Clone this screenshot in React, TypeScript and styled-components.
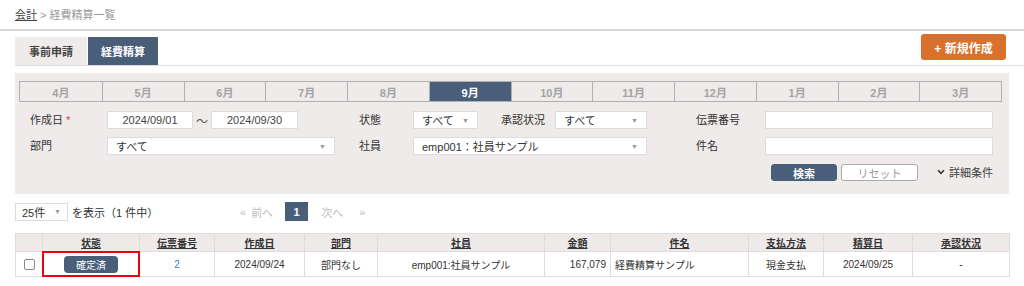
import styled, { createGlobalStyle } from "styled-components";

const GlobalStyle = createGlobalStyle`
  body {
    margin: 0;
    background: #fff;
    color: #333;
    font-family: "Liberation Sans", "Noto Sans CJK JP", sans-serif;
  }
`;

const NAVY = "#485e79";

const Breadcrumb = styled.div`
  height: 31px;
  box-sizing: border-box;
  padding: 6px 0 0 15px;
  font-size: 11px;
  color: #9a9a9a;
  border-bottom: 2px solid #d6d6d6;
  a {
    color: #444;
    text-decoration: underline;
  }
`;

const Main = styled.div`
  padding-left: 15px;
`;

const TabRow = styled.div`
  display: flex;
  align-items: flex-start;
  margin-top: 3px;
  border-bottom: 1px solid #dedede;
`;

const Tab = styled.div<{ $active?: boolean }>`
  margin-top: 3px;
  width: ${(p) => (p.$active ? "70px" : "72px")};
  margin-right: ${(p) => (p.$active ? "0" : "1px")};
  height: 28px;
  display: flex;
  align-items: center;
  justify-content: center;
  font-size: 11px;
  font-weight: bold;
  background: ${(p) => (p.$active ? NAVY : "#efebea")};
  color: ${(p) => (p.$active ? "#fff" : "#444")};
`;

const NewButton = styled.button`
  margin-left: auto;
  margin-right: 18px;
  width: 85px;
  height: 26px;
  border: none;
  border-radius: 3px;
  background: #d9712c;
  color: #fff;
  font-family: inherit;
  font-size: 12px;
  font-weight: bold;
  padding: 0;
`;

const Panel = styled.div`
  margin: 7px 15px 0 0;
  background: #efebea;
  padding: 8px 7px 13px 4px;
`;

const MonthBar = styled.div`
  display: grid;
  grid-template-columns: repeat(12, 1fr);
  border: 1px solid #b0b0b0;
  height: 21px;
  box-sizing: border-box;
`;

const Month = styled.div<{ $active?: boolean }>`
  display: flex;
  align-items: center;
  justify-content: center;
  font-size: 11px;
  font-weight: bold;
  color: ${(p) => (p.$active ? "#fff" : "#a3a3a3")};
  background: ${(p) => (p.$active ? NAVY : "transparent")};
  & + & {
    border-left: 1px solid #b0b0b0;
  }
`;

const FormGrid = styled.div`
  margin: 9px 0 0 11px;
  display: grid;
  grid-template-columns: 77px 252px 54px 283px 69px 228px;
  grid-auto-rows: 18px;
  row-gap: 8px;
`;

const Label = styled.div`
  font-size: 11px;
  line-height: 18px;
  color: #333;
  white-space: nowrap;
`;

const Required = styled.span`
  color: #e23b3b;
  margin-left: 3px;
`;

const Field = styled.div`
  display: flex;
  align-items: center;
`;

const TextBox = styled.div<{ $w: number; $center?: boolean }>`
  width: ${(p) => p.$w}px;
  height: 18px;
  box-sizing: border-box;
  background: #fff;
  border: 1px solid #dcdcdc;
  font-size: 11px;
  line-height: 16px;
  color: #444;
  text-align: ${(p) => (p.$center ? "center" : "left")};
`;

const Tilde = styled.span`
  width: 18px;
  text-align: center;
  font-size: 12px;
  color: #555;
`;

const SelectBox = styled.div<{ $w: number }>`
  width: ${(p) => p.$w}px;
  height: 18px;
  box-sizing: border-box;
  background: #fff;
  border: 1px solid #dcdcdc;
  display: flex;
  align-items: center;
  justify-content: space-between;
  padding: 0 8px 0 8px;
  font-size: 11px;
  color: #333;
`;

const Arrow = styled.span`
  font-size: 7px;
  color: #999;
`;

const InlineLabel = styled(Label)`
  width: 54px;
  margin-left: 23px;
`;

const ButtonRow = styled.div`
  grid-column: 1 / -1;
  display: flex;
  justify-content: flex-end;
  align-items: center;
`;

const SearchButton = styled.button<{ $primary?: boolean }>`
  width: ${(p) => (p.$primary ? "66px" : "77px")};
  height: 17px;
  box-sizing: border-box;
  padding: 0;
  margin-right: 4px;
  font-family: inherit;
  font-size: 11px;
  font-weight: ${(p) => (p.$primary ? "bold" : "normal")};
  border-radius: 3px;
  border: 1px solid ${(p) => (p.$primary ? NAVY : "#aaa")};
  background: ${(p) => (p.$primary ? NAVY : "#fff")};
  color: ${(p) => (p.$primary ? "#fff" : "#999")};
`;

const Detail = styled.div`
  margin-left: 15px;
  display: flex;
  align-items: center;
  gap: 4px;
  font-size: 11px;
  color: #444;
`;

const ListControls = styled.div`
  margin-top: 8px;
  display: flex;
  align-items: center;
  height: 19px;
`;

const LeftGroup = styled.div`
  width: 225px;
  display: flex;
  align-items: center;
  font-size: 11px;
  color: #333;
`;

const PerPage = styled(SelectBox)`
  padding: 0 6px;
  margin-right: 4px;
`;

const Pager = styled.div`
  display: flex;
  align-items: center;
  font-size: 11px;
  color: #bdbdbd;
`;

const PagerLink = styled.span<{ $gap: number }>`
  margin-right: ${(p) => p.$gap}px;
`;

const PageNum = styled.span`
  width: 23px;
  height: 19px;
  background: ${NAVY};
  color: #fff;
  font-weight: bold;
  display: flex;
  align-items: center;
  justify-content: center;
  margin-right: 13px;
`;

const Table = styled.table`
  margin-top: 12px;
  width: 994px;
  table-layout: fixed;
  border-collapse: collapse;
  font-size: 10px;
`;

const Th = styled.th`
  height: 17px;
  padding: 0;
  background: #eeeae9;
  border: 1px solid #e0dcdb;
  font-weight: bold;
  text-decoration: underline;
  color: #333;
`;

const Td = styled.td<{ $align?: string; $highlight?: boolean }>`
  height: 24px;
  padding: 0 4px;
  border: 1px solid #e0dcdb;
  text-align: ${(p) => p.$align ?? "center"};
  color: #333;
  position: ${(p) => (p.$highlight ? "relative" : "static")};
  &::after {
    content: ${(p) => (p.$highlight ? "''" : "none")};
    position: absolute;
    inset: -1px -1px -1px -1px;
    border: 2px solid #e60012;
  }
`;

const Check = styled.input`
  appearance: none;
  margin: 3px 0 0 0;
  width: 11px;
  height: 11px;
  border: 1px solid #888;
  border-radius: 2px;
  background: #fff;
`;

const StatusBadge = styled.span`
  display: inline-flex;
  align-items: center;
  justify-content: center;
  width: 54px;
  height: 17px;
  border-radius: 4px;
  background: ${NAVY};
  color: #fff;
  font-size: 10px;
`;

const NumLink = styled.span`
  color: #2f7fc1;
`;

const months = ["4月", "5月", "6月", "7月", "8月", "9月", "10月", "11月", "12月", "1月", "2月", "3月"];
const cols = [27, 97, 75, 90, 73, 167, 66, 138, 75, 89, 97];
const heads = ["", "状態", "伝票番号", "作成日", "部門", "社員", "金額", "件名", "支払方法", "精算日", "承認状況"];

export default function App() {
  return (
    <>
      <GlobalStyle />
      <Breadcrumb>
        <a>会計</a> &gt; 経費精算一覧
      </Breadcrumb>
      <Main>
        <TabRow>
          <Tab>事前申請</Tab>
          <Tab $active>経費精算</Tab>
          <NewButton>+ 新規作成</NewButton>
        </TabRow>

        <Panel>
          <MonthBar>
            {months.map((m) => (
              <Month key={m} $active={m === "9月"}>
                {m}
              </Month>
            ))}
          </MonthBar>
          <FormGrid>
            <Label>
              作成日<Required>*</Required>
            </Label>
            <Field>
              <TextBox $w={86} $center>2024/09/01</TextBox>
              <Tilde>〜</Tilde>
              <TextBox $w={87} $center>2024/09/30</TextBox>
            </Field>
            <Label>状態</Label>
            <Field>
              <SelectBox $w={65}>
                すべて<Arrow>▼</Arrow>
              </SelectBox>
              <InlineLabel>承認状況</InlineLabel>
              <SelectBox $w={92}>
                すべて<Arrow>▼</Arrow>
              </SelectBox>
            </Field>
            <Label>伝票番号</Label>
            <TextBox $w={228} />

            <Label>部門</Label>
            <Field>
              <SelectBox $w={228}>
                すべて<Arrow>▼</Arrow>
              </SelectBox>
            </Field>
            <Label>社員</Label>
            <Field>
              <SelectBox $w={234}>
                emp001：社員サンプル<Arrow>▼</Arrow>
              </SelectBox>
            </Field>
            <Label>件名</Label>
            <TextBox $w={228} />

            <ButtonRow>
              <SearchButton $primary>検索</SearchButton>
              <SearchButton>リセット</SearchButton>
              <Detail>
                <svg width="8" height="6" viewBox="0 0 8 6">
                  <path d="M1 1.2 L4 4.4 L7 1.2" fill="none" stroke="#333" strokeWidth="1.6" />
                </svg>
                詳細条件
              </Detail>
            </ButtonRow>
          </FormGrid>
        </Panel>

        <ListControls>
          <LeftGroup>
            <PerPage $w={53}>
              25件<Arrow>▼</Arrow>
            </PerPage>
            を表示（1 件中）
          </LeftGroup>
          <Pager>
            <PagerLink $gap={5}>«</PagerLink>
            <PagerLink $gap={12}>前へ</PagerLink>
            <PageNum>1</PageNum>
            <PagerLink $gap={16}>次へ</PagerLink>
            <PagerLink $gap={0}>»</PagerLink>
          </Pager>
        </ListControls>

        <Table>
          <colgroup>
            {cols.map((w, i) => (
              <col key={i} style={{ width: w }} />
            ))}
          </colgroup>
          <thead>
            <tr>
              {heads.map((h, i) => (
                <Th key={i}>{h}</Th>
              ))}
            </tr>
          </thead>
          <tbody>
            <tr>
              <Td>
                <Check type="checkbox" />
              </Td>
              <Td $highlight>
                <StatusBadge>確定済</StatusBadge>
              </Td>
              <Td>
                <NumLink>2</NumLink>
              </Td>
              <Td>2024/09/24</Td>
              <Td>部門なし</Td>
              <Td>emp001:社員サンプル</Td>
              <Td $align="right">167,079</Td>
              <Td $align="left">経費精算サンプル</Td>
              <Td>現金支払</Td>
              <Td>2024/09/25</Td>
              <Td>-</Td>
            </tr>
          </tbody>
        </Table>
      </Main>
    </>
  );
}
